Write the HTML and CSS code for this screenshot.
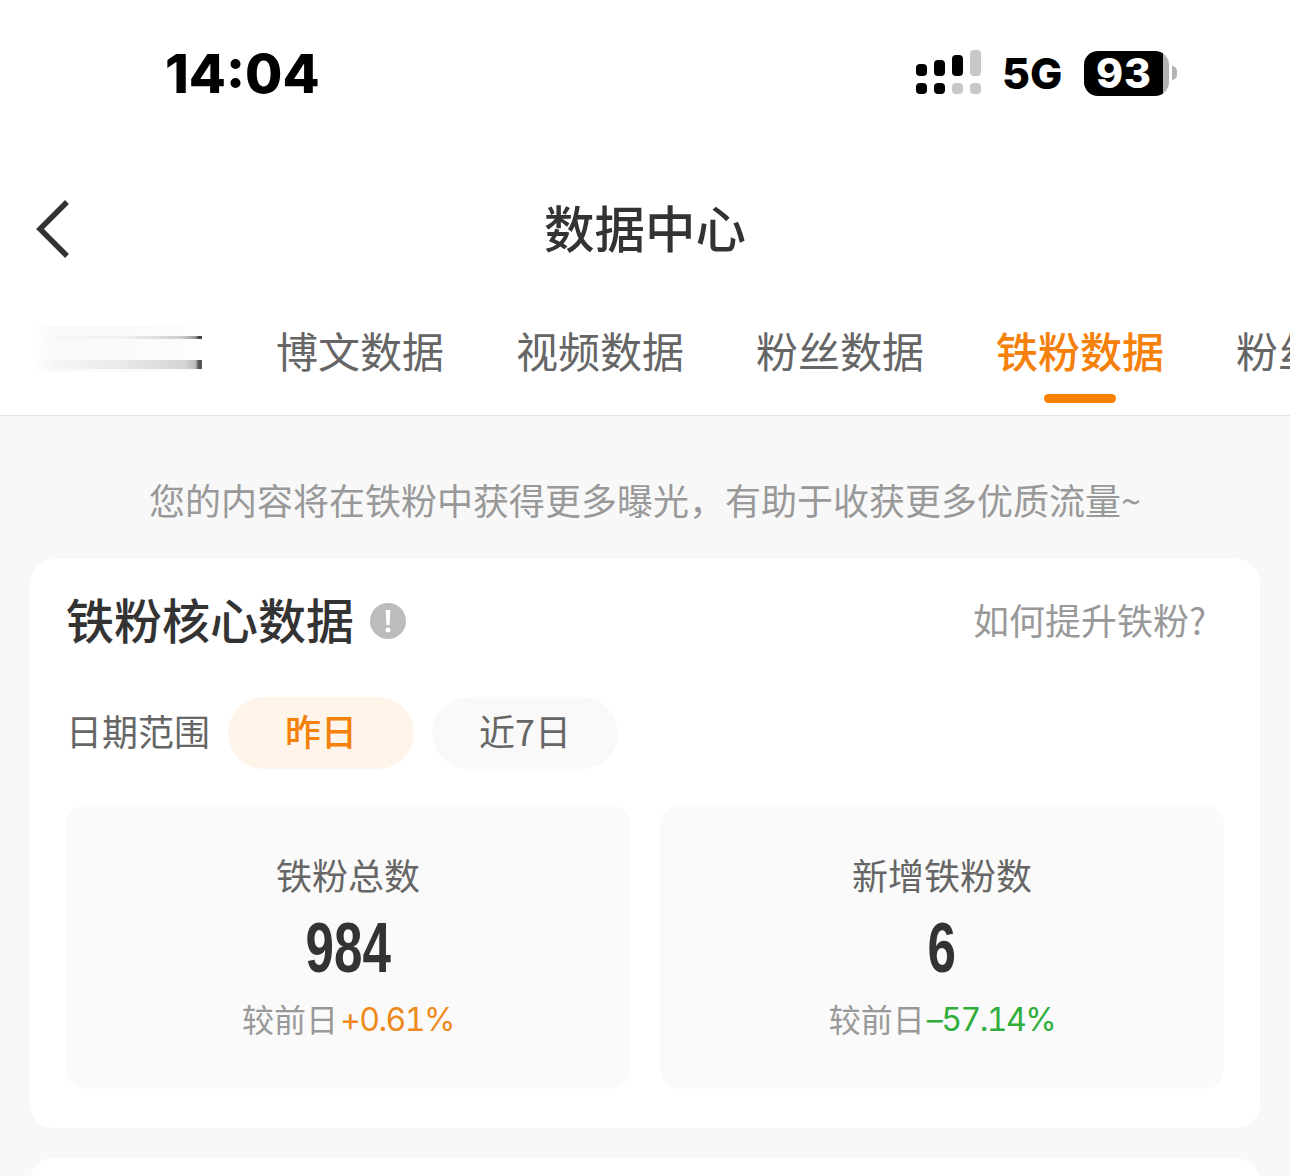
FILE: index.html
```html
<!DOCTYPE html>
<html lang="zh-CN">
<head>
<meta charset="utf-8">
<title>数据中心</title>
<link rel="stylesheet" href="styles.css">
</head>
<body>
<div class="page">
  <header class="status">
    <span class="time">14:04</span>
    <div class="status-right">
      <svg class="signal" width="66" height="46" viewBox="0 0 66 46" aria-hidden="true">
        <rect x="0" y="14" width="11" height="12" rx="4" fill="#000"/>
        <rect x="18" y="10" width="11" height="16" rx="4" fill="#000"/>
        <rect x="36" y="5" width="11" height="21" rx="4" fill="#000"/>
        <rect x="54" y="0" width="11" height="26" rx="4" fill="#c8c8c8"/>
        <rect x="0" y="33" width="11" height="11" rx="4" fill="#000"/>
        <rect x="18" y="33" width="11" height="11" rx="4" fill="#000"/>
        <rect x="36" y="33" width="11" height="11" rx="4" fill="#c8c8c8"/>
        <rect x="54" y="33" width="11" height="11" rx="4" fill="#c8c8c8"/>
      </svg>
      <span class="net">5G</span>
      <div class="battery">
        <div class="battery-body"><span class="battery-num">93</span></div>
        <span class="battery-tip"></span>
      </div>
    </div>
  </header>

  <nav class="nav">
    <svg class="back" width="34" height="60" viewBox="0 0 34 60" aria-hidden="true">
      <path d="M31 3 L4 30 L31 57" fill="none" stroke="#333" stroke-width="5.5"/>
    </svg>
    <h1 class="nav-title">数据中心</h1>
  </nav>

  <div class="tabs">
    <div class="tab tab-blurred"><span class="blur-top"></span><span class="blur-bottom"></span></div>
    <div class="tab">博文数据</div>
    <div class="tab">视频数据</div>
    <div class="tab">粉丝数据</div>
    <div class="tab tab-active">铁粉数据</div>
    <div class="tab">粉丝画像</div>
  </div>

  <main class="content">
    <p class="notice">您的内容将在铁粉中获得更多曝光，有助于收获更多优质流量~</p>

    <section class="card">
      <div class="card-head">
        <div class="card-title-wrap">
          <h2 class="card-title">铁粉核心数据</h2>
          <svg class="info" width="36" height="36" viewBox="0 0 36 36" aria-hidden="true">
            <circle cx="18" cy="18" r="18" fill="#bcbcbc"/>
            <path d="M15.6 7 h4.8 l-0.8 15 h-3.2 z" fill="#fff"/>
            <circle cx="18" cy="27" r="2.5" fill="#fff"/>
          </svg>
        </div>
        <span class="card-link">如何提升铁粉?</span>
      </div>

      <div class="filter">
        <span class="filter-label">日期范围</span>
        <span class="pill pill-active">昨日</span>
        <span class="pill">近7日</span>
      </div>

      <div class="stats">
        <div class="stat">
          <div class="stat-label">铁粉总数</div>
          <div class="stat-value">984</div>
          <div class="stat-delta">较前日<span class="up">+0.61%</span></div>
        </div>
        <div class="stat">
          <div class="stat-label">新增铁粉数</div>
          <div class="stat-value">6</div>
          <div class="stat-delta">较前日<span class="down">–57.14%</span></div>
        </div>
      </div>
    </section>

    <section class="card card-next"></section>
  </main>
</div>
</body>
</html>
```
FILE: styles.css
```css
* { box-sizing: border-box; }
html, body { margin: 0; padding: 0; }
body {
  font-family: "Noto Sans CJK SC", "Noto Sans", sans-serif;
  background: #fff;
  color: #333;
}
.page {
  width: 1290px;
  height: 1176px;
  overflow: hidden;
  display: flex;
  flex-direction: column;
}

/* status bar */
.status {
  height: 146px;
  flex: none;
  display: flex;
  align-items: center;
  justify-content: space-between;
  padding: 0 113px 0 165px;
}
.time {
  font-family: Inter, sans-serif;
  font-weight: 800;
  font-size: 54px;
  line-height: 1;
  padding-top: 2px;
  color: #000;
}
.status-right { display: flex; align-items: center; }
.signal { display: block; margin-left: 1px; }
.net {
  font-family: Inter, sans-serif;
  font-weight: 800;
  font-size: 43px;
  line-height: 1;
  color: #000;
  margin-left: 20px;
  width: 82px;
}
.battery { display: flex; align-items: center; }
.battery-body {
  width: 85px;
  height: 45px;
  border-radius: 14px;
  background: linear-gradient(90deg, #000 0, #000 93%, #b4b4b4 93%);
  display: flex;
  align-items: center;
  justify-content: center;
  padding-right: 5px;
}
.battery-num {
  font-family: Inter, sans-serif;
  font-weight: 800;
  font-size: 41px;
  line-height: 1;
  color: #fff;
  letter-spacing: 1px;
}
.battery-tip {
  width: 5px;
  height: 14px;
  margin-left: 3px;
  border-radius: 0 6px 6px 0;
  background: #b4b4b4;
}

/* nav */
.nav {
  height: 168px;
  flex: none;
  display: flex;
  align-items: center;
  justify-content: center;
  padding-bottom: 8px;
  position: relative;
}
.back { position: absolute; left: 36px; top: 53px; }
.nav-title {
  margin: 0;
  font-size: 50.5px;
  font-weight: 500;
  line-height: 70px;
  color: #333;
}

/* tabs */
.tabs {
  height: 102px;
  flex: none;
  display: flex;
  gap: 72px;
  padding: 12px 0 0 34px;
  overflow: hidden;
  border-bottom: 1px solid #e4e4e4;
}
.tab {
  flex: none;
  position: relative;
  font-size: 42px;
  line-height: 48px;
  color: #666;
}
.tab-active { color: #f5800a; font-weight: 500; }
.tab-active::after {
  content: "";
  position: absolute;
  left: 48px;
  top: 68px;
  width: 72px;
  height: 9px;
  border-radius: 5px;
  background: #f78000;
}
.tab-blurred {
  width: 168px;
  height: 46px;
  margin-right: 2px;
  display: flex;
  flex-direction: column;
  justify-content: space-between;
  background: linear-gradient(90deg, rgba(245,245,245,0), #f9f9f9 12%, #fbfbfb 80%, #fff);
}
.blur-top {
  height: 3px;
  margin-top: 10px;
  background: linear-gradient(90deg, rgba(190,190,190,0) 0, rgba(200,200,200,.2) 55%, #ccc 88%, #999 96%, #444 98%, #444 100%);
}
.blur-bottom {
  height: 9px;
  margin-bottom: 3px;
  background: linear-gradient(90deg, rgba(190,190,190,0) 0, rgba(205,205,205,.35) 50%, #d4d4d4 90%, #bbb 96%, #555 98%, #555 100%);
}

/* content */
.content {
  flex: 1;
  background: #f8f8f8;
  padding: 0 30px;
}
.notice {
  margin: 0;
  padding: 60px 0 37px;
  text-align: center;
  font-size: 36px;
  line-height: 46px;
  color: #999;
}
.card {
  background: #fff;
  border-radius: 24px;
  padding: 31px 36px 39px;
}
.card-next { margin-top: 30px; height: 120px; }
.card-head {
  display: flex;
  align-items: center;
  justify-content: space-between;
  padding: 0 18px 0 0;
  height: 62px;
}
.card-title-wrap { display: flex; align-items: center; gap: 16px; }
.card-title {
  margin: 0;
  padding-bottom: 7px;
  font-size: 48px;
  font-weight: 500;
  line-height: 62px;
  color: #333;
}
.info { display: block; }
.card-link { font-size: 36px; line-height: 46px; padding-bottom: 4px; color: #999; }

.filter {
  display: flex;
  align-items: center;
  margin-top: 45px;
}
.filter-label {
  font-size: 36px;
  line-height: 46px;
  padding-bottom: 6px;
  color: #666;
  width: 162px;
}
.pill {
  width: 186px;
  height: 72px;
  margin-right: 18px;
  border-radius: 36px;
  background: #f9f9f9;
  font-size: 36px;
  line-height: 66px;
  text-align: center;
  color: #666;
}
.pill-active {
  background: #fff4e9;
  color: #f5800a;
  font-weight: 500;
}

.stats {
  display: grid;
  grid-template-columns: 1fr 1fr;
  gap: 30px;
  margin-top: 36px;
}
.stat {
  height: 284px;
  border-radius: 20px;
  background: #fafafa;
  padding-top: 44px;
  display: flex;
  flex-direction: column;
  align-items: center;
}
.stat-label {
  font-size: 36px;
  line-height: 50px;
  color: #666;
}
.stat-value {
  margin-top: 7px;
  font-family: "Liberation Sans", sans-serif;
  font-weight: 700;
  font-size: 71px;
  line-height: 84px;
  color: #333;
  transform: scaleX(.72);
}
.stat-delta {
  margin-top: 2px;
  font-size: 32px;
  line-height: 46px;
  color: #999;
  display: flex;
  align-items: center;
}
.up, .down {
  font-family: Inter, sans-serif;
  font-size: 32px;
  font-weight: 400;
  font-variant-numeric: tabular-nums;
  letter-spacing: -1.5px;
  padding-top: 5px;
  margin-left: 2px;
}
.up { color: #ee8a1c; }
.down { color: #2fae3c; }
```
